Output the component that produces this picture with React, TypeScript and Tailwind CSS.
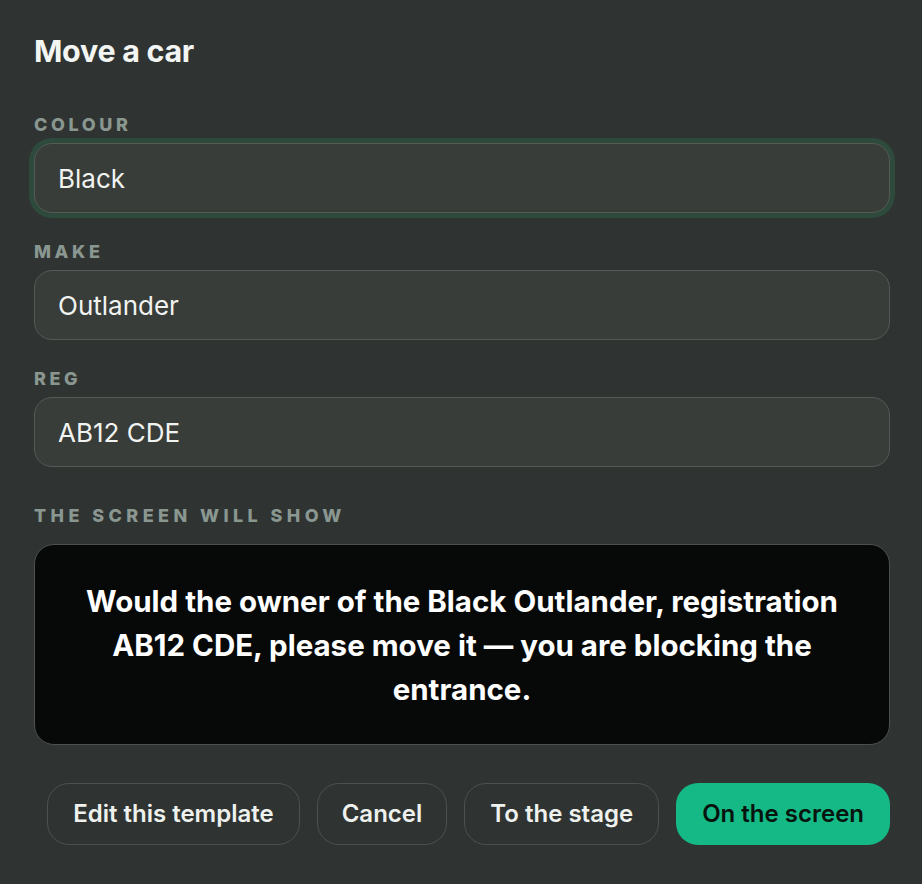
import { useState } from "react";

const font = "font-['Inter','Noto_Sans',sans-serif]";

function Field({
	label,
	value,
	onChange,
	focused,
}: {
	label: string;
	value: string;
	onChange: (v: string) => void;
	focused?: boolean;
}) {
	return (
		<div className="flex flex-col">
			<label className="text-[18px] leading-[17px] font-extrabold tracking-[0.2em] text-[#8a9791]">{label}</label>
			<input
				value={value}
				onChange={(e) => onChange(e.target.value)}
				className={`mt-[10px] h-[70px] w-full rounded-[18px] border-[1.5px] border-[#555a55] bg-[#393d39] px-[23px] text-[26px] text-[#f1f3f1] outline-none ${
					focused ? "shadow-[0_0_0_5px_#2d4a3d]" : ""
				}`}
			/>
		</div>
	);
}

export default function App() {
	const [colour, setColour] = useState("Black");
	const [make, setMake] = useState("Outlander");
	const [reg, setReg] = useState("AB12 CDE");

	return (
		<div className={`min-h-screen bg-[#2f3432] pl-[34px] pr-[32px] pt-[36px] pb-[38px] ${font}`}>
			<h1 className="text-[30.5px] leading-[30px] font-bold tracking-[-0.01em] text-[#f3f5f3]">Move a car</h1>

			<div className="mt-[50px] flex flex-col gap-[30px]">
				<Field label="COLOUR" value={colour} onChange={setColour} focused />
				<Field label="MAKE" value={make} onChange={setMake} />
				<Field label="REG" value={reg} onChange={setReg} />
			</div>

			<div className="mt-[40px] text-[18px] leading-[17px] font-extrabold tracking-[0.245em] text-[#8a9791]">
				THE SCREEN WILL SHOW
			</div>
			<div className="mt-[20px] flex h-[201px] items-center justify-center rounded-[20px] border-[1.5px] border-[#4c514d] bg-[#070908] px-[40px]">
				<p className="text-center text-[29.5px] leading-[44px] font-bold text-white">
					Would the owner of the {colour} {make}, registration {reg}, please move it — you are blocking the
					entrance.
				</p>
			</div>

			<div className="mt-[38px] flex justify-end gap-[17px]">
				<button className="h-[62px] rounded-[22px] border-[1.5px] border-[#4c514d] px-[25px] text-[24px] font-semibold text-[#eef1ee]">
					Edit this template
				</button>
				<button className="h-[62px] rounded-[22px] border-[1.5px] border-[#4c514d] px-[24px] text-[24px] font-semibold text-[#eef1ee]">
					Cancel
				</button>
				<button className="h-[62px] rounded-[22px] border-[1.5px] border-[#4c514d] px-[25px] text-[24px] font-semibold text-[#eef1ee]">
					To the stage
				</button>
				<button className="h-[62px] rounded-[22px] bg-[#14b985] px-[26px] text-[24px] font-semibold text-[#07140e]">
					On the screen
				</button>
			</div>
		</div>
	);
}
